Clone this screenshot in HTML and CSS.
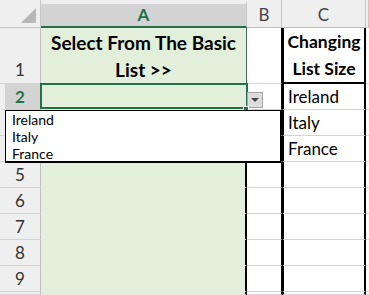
FILE: index.html
```html
<!DOCTYPE html>
<html lang="en">
<head>
    <meta charset="UTF-8">
    <title>Basic List Dropdown</title>
    <link rel="stylesheet" href="styles.css">
</head>
<body>
    <div class="sheet">
        <!-- Column headers -->
        <div class="corner"><span class="corner-tri"></span></div>
        <div class="col-head col-sel">A</div>
        <div class="col-head">B</div>
        <div class="col-head">C</div>
        <div class="col-head edge"></div>

        <!-- Row 1 -->
        <div class="row-head tall">1</div>
        <div class="cell col-a a-title title">Select From The Basic<br>List &gt;&gt;</div>
        <div class="cell col-b"></div>
        <div class="cell col-c c-title title">Changing<br>List Size</div>
        <div class="cell edge"></div>

        <!-- Row 2 (active) -->
        <div class="row-head row-sel">2</div>
        <div class="cell col-a active"><span class="fill-handle"></span></div>
        <div class="cell col-b"></div>
        <div class="cell col-c">Ireland</div>
        <div class="cell edge"></div>

        <!-- rows 3-4 sit under the open list -->
        <div class="row-head"></div>
        <div class="cell col-a boxed"></div>
        <div class="cell col-b"></div>
        <div class="cell col-c">Italy</div>
        <div class="cell edge"></div>

        <div class="row-head"></div>
        <div class="cell col-a boxed"></div>
        <div class="cell col-b"></div>
        <div class="cell col-c">France</div>
        <div class="cell edge"></div>

        <div class="row-head">5</div>
        <div class="cell col-a boxed"></div>
        <div class="cell col-b"></div>
        <div class="cell col-c"></div>
        <div class="cell edge"></div>

        <div class="row-head">6</div>
        <div class="cell col-a boxed"></div>
        <div class="cell col-b"></div>
        <div class="cell col-c"></div>
        <div class="cell edge"></div>

        <div class="row-head">7</div>
        <div class="cell col-a boxed"></div>
        <div class="cell col-b"></div>
        <div class="cell col-c"></div>
        <div class="cell edge"></div>

        <div class="row-head">8</div>
        <div class="cell col-a boxed"></div>
        <div class="cell col-b"></div>
        <div class="cell col-c"></div>
        <div class="cell edge"></div>

        <div class="row-head">9</div>
        <div class="cell col-a boxed"></div>
        <div class="cell col-b"></div>
        <div class="cell col-c"></div>
        <div class="cell edge"></div>

        <div class="row-head"></div>
        <div class="cell col-a boxed"></div>
        <div class="cell col-b"></div>
        <div class="cell col-c"></div>
        <div class="cell edge"></div>

        <!-- Data validation arrow + open list -->
        <div class="drop-btn"><span class="drop-arrow"></span></div>
        <ul class="drop-list">
            <li>Ireland</li>
            <li>Italy</li>
            <li>France</li>
        </ul>
    </div>
</body>
</html>
```

FILE: styles.css
```css
/* Reset */
* {
    margin: 0;
    padding: 0;
    box-sizing: border-box;
}

body {
    background: #ffffff;
    font-family: 'Lato', 'Open Sans', sans-serif;
    overflow: hidden;
}

/* Sheet grid */
.sheet {
    position: relative;
    display: grid;
    grid-template-columns: 41px 206px 35px 84px 3px;
    grid-template-rows: 28px 56px repeat(8, 26px) 3px;
}

/* Headers */
.corner {
    position: relative;
    background: #efefef;
    border-right: 1px solid #c6c6c6;
    border-bottom: 1px solid #c6c6c6;
}

.corner-tri {
    position: absolute;
    right: 4px;
    bottom: 4px;
    width: 0;
    height: 0;
    border-left: 15px solid transparent;
    border-bottom: 15px solid #b7b7b7;
}

.col-head {
    background: #efefef;
    border-right: 1px solid #c6c6c6;
    border-bottom: 1px solid #bfbfbf;
    color: #444;
    font-size: 17px;
    line-height: 28px;
    padding-top: 1px;
    text-align: center;
}

.col-head.col-sel {
    background: #d3d3d3;
    color: #217346;
    font-weight: 700;
    border-top: 4px solid #efefef;
    line-height: 22px;
    padding-top: 0;
    border-bottom: 2px solid #217346;
}

.row-head {
    background: #efefef;
    border-right: 1px solid #bfbfbf;
    border-bottom: 1px solid #d4d4d4;
    color: #333;
    font-size: 17px;
    line-height: 26px;
    text-align: center;
}

.row-head.tall {
    display: flex;
    align-items: flex-end;
    justify-content: center;
}

.row-head.row-sel {
    background: #d3d3d3;
    border-left: 5px solid #efefef;
    padding-right: 5px;
    color: #217346;
    font-weight: 700;
}

/* Cells */
.cell {
    position: relative;
    border-bottom: 1px solid #d4d4d4;
    color: #000;
    font-size: 17px;
    line-height: 26px;
    white-space: nowrap;
}

.col-a {
    background: #e2efda;
    border-bottom-color: #e2efda;
}

.a-title {
    border-right: 1px solid #3f6b4c;
    border-bottom-color: #d4d4d4;
    font-size: 19px;
}

.boxed {
    border-right: 2px solid #000;
}

.col-b {
    border-right: 1px solid #000;
}

.col-c {
    border-left: 2px solid #000;
    border-right: 2px solid #000;
    padding-left: 4px;
}

.edge {
    border-bottom: 1px solid #d4d4d4;
}

.title {
    display: flex;
    flex-direction: column;
    justify-content: flex-end;
    align-items: center;
    font-weight: 700;
    line-height: 27px;
    text-align: center;
    padding-left: 0;
}

.c-title {
    border-bottom: 2px solid #000;
    font-size: 17.5px;
}

/* Active cell */
.active::after {
    content: "";
    position: absolute;
    left: -1px;
    top: -1px;
    right: -1px;
    bottom: 0;
    border: 2px solid #217346;
}

.fill-handle {
    position: absolute;
    right: -2px;
    bottom: -3px;
    width: 6px;
    height: 6px;
    background: #217346;
    border: 1px solid #ffffff;
    z-index: 2;
}

/* Dropdown */
.drop-btn {
    position: absolute;
    left: 247px;
    top: 92px;
    width: 16px;
    height: 16px;
    background: #dcdcdc;
    border: 1px solid #a6a6a6;
    display: flex;
    align-items: center;
    justify-content: center;
}

.drop-arrow {
    width: 0;
    height: 0;
    border-left: 4px solid transparent;
    border-right: 4px solid transparent;
    border-top: 4px solid #444;
}

.drop-list {
    position: absolute;
    left: 5px;
    top: 110px;
    width: 276px;
    height: 53px;
    background: #ffffff;
    border: 1px solid #000;
    border-bottom-width: 2px;
    list-style: none;
    padding-left: 6px;
    font-size: 14px;
    line-height: 17px;
    color: #000;
    z-index: 3;
}
```
